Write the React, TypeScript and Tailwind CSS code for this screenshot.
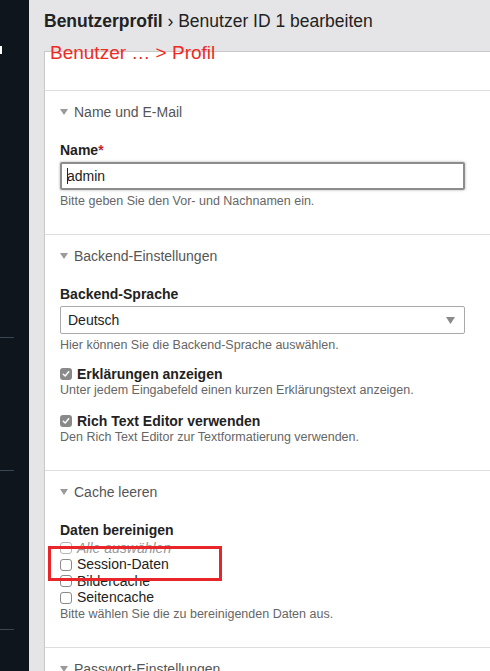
import React from "react";

function Tri() {
  return (
    <svg width="8" height="6" viewBox="0 0 8 6" className="mr-[6px] shrink-0">
      <path d="M0 0 H8 L4 6 Z" fill="#9a9a9a" />
    </svg>
  );
}

function Legend({ children }: { children: React.ReactNode }) {
  return (
    <div className="flex items-center h-[16px] text-[14px] leading-[16px] text-[#555]">
      <Tri />
      <span>{children}</span>
    </div>
  );
}

function CheckedBox() {
  return (
    <span className="w-[12px] h-[12px] rounded-[3px] bg-[#8a8a8a] flex items-center justify-center shrink-0 mr-[5px]">
      <svg width="8" height="8" viewBox="0 0 8 8">
        <path d="M1.3 4.2 L3.2 6 L6.7 1.8" stroke="#fff" strokeWidth="1.5" fill="none" strokeLinecap="round" strokeLinejoin="round" />
      </svg>
    </span>
  );
}

function EmptyBox({ faded }: { faded?: boolean }) {
  return (
    <span
      className={
        faded
          ? "w-[12px] h-[12px] rounded-[3px] border border-[#b5b5b5] bg-white shrink-0 mr-[5px]"
          : "w-[12px] h-[12px] rounded-[3px] border border-[#8a8a8a] bg-white shrink-0 mr-[5px]"
      }
    />
  );
}

function Help({ children, mt }: { children: React.ReactNode; mt: string }) {
  return <div className={`${mt} text-[12.5px] leading-[14px] text-[#666]`}>{children}</div>;
}

export default function App() {
  return (
    <div
      className="w-[490px] h-[671px] overflow-hidden flex bg-[#e5e5e7] relative"
      style={{ fontFamily: '"Liberation Sans", Arial, Helvetica, sans-serif' }}
    >
      {/* Sidebar */}
      <div className="w-[29px] shrink-0 bg-[#0e151d] relative">
        <div className="absolute left-0 top-[46px] w-[2px] h-[8px] bg-white" />
        <div className="absolute left-0 top-[337px] w-[14px] h-px bg-[#3c4650]" />
        <div className="absolute left-0 top-[470px] w-[14px] h-px bg-[#3c4650]" />
        <div className="absolute left-0 top-[629px] w-[14px] h-px bg-[#3c4650]" />
      </div>

      {/* Main */}
      <div className="flex-1 flex flex-col pl-[15px]">
        <div className="h-[51px] shrink-0 pt-[12px] text-[17.5px] leading-[18px] text-[#222]">
          <span className="font-bold">Benutzerprofil</span> › Benutzer ID 1 bearbeiten
        </div>

        <div className="flex-1 bg-white border-l border-t border-[#c8c8c8] relative">
          <div className="h-[39px] border-b border-[#dedede]" />

          {/* Section 1 */}
          <div className="pt-[13px] pb-[26px] pl-[15px] border-b border-[#dedede]">
            <Legend>Name und E-Mail</Legend>
            <div className="mt-[22px] text-[14px] leading-[16px] font-bold text-[#222]">
              Name<span className="text-[#c0262d]">*</span>
            </div>
            <div className="mt-[4px] w-[405px] h-[28px] border-2 border-[#8d8d8d] rounded-[2px] shadow-[0_0_2px_1px_rgba(0,0,0,0.15)] flex items-center pl-[5px] text-[14px] text-[#222]">
              <span className="w-px h-[16px] bg-[#222] -mr-px" />
              <span>admin</span>
            </div>
            <Help mt="mt-[4px]">Bitte geben Sie den Vor- und Nachnamen ein.</Help>
          </div>

          {/* Section 2 */}
          <div className="pt-[13px] pb-[26px] pl-[15px] border-b border-[#dedede]">
            <Legend>Backend-Einstellungen</Legend>
            <div className="mt-[22px] text-[14px] leading-[16px] font-bold text-[#222]">Backend-Sprache</div>
            <div className="mt-[4px] w-[405px] h-[28px] border border-[#a9a9a9] rounded-[2px] flex items-center justify-between pl-[7px] pr-[9px] text-[14px] text-[#222]">
              <span>Deutsch</span>
              <svg width="9" height="7" viewBox="0 0 9 7">
                <path d="M0 0 H9 L4.5 7 Z" fill="#8a8a8a" />
              </svg>
            </div>
            <Help mt="mt-[4px]">Hier können Sie die Backend-Sprache auswählen.</Help>
            <div className="mt-[14px] flex items-center h-[16px] text-[14px] leading-[16px] font-bold text-[#222]">
              <CheckedBox />
              <span>Erklärungen anzeigen</span>
            </div>
            <Help mt="mt-[1px]">Unter jedem Eingabefeld einen kurzen Erklärungstext anzeigen.</Help>
            <div className="mt-[16px] flex items-center h-[16px] text-[14px] leading-[16px] font-bold text-[#222]">
              <CheckedBox />
              <span>Rich Text Editor verwenden</span>
            </div>
            <Help mt="mt-[1px]">Den Rich Text Editor zur Textformatierung verwenden.</Help>
          </div>

          {/* Section 3 */}
          <div className="pt-[13px] pb-[26px] pl-[15px] border-b border-[#dedede]">
            <Legend>Cache leeren</Legend>
            <div className="mt-[22px] text-[14px] leading-[16px] font-bold text-[#222]">Daten bereinigen</div>
            <div className="mt-[2px] flex flex-col text-[14px] text-[#222]">
              <div className="flex items-center h-[16.5px] italic text-[#999]">
                <EmptyBox faded />
                <span>Alle auswählen</span>
              </div>
              <div className="flex items-center h-[16.5px]">
                <EmptyBox />
                <span>Session-Daten</span>
              </div>
              <div className="flex items-center h-[16.5px]">
                <EmptyBox />
                <span>Bildercache</span>
              </div>
              <div className="flex items-center h-[16.5px]">
                <EmptyBox />
                <span>Seitencache</span>
              </div>
            </div>
            <Help mt="mt-[1px]">Bitte wählen Sie die zu bereinigenden Daten aus.</Help>
          </div>

          {/* Section 4 */}
          <div className="pt-[13px] pl-[15px]">
            <Legend>Passwort-Einstellungen</Legend>
          </div>
        </div>
      </div>

      {/* Annotations */}
      <div className="absolute left-[50px] top-[42px] text-[19px] leading-[22px] text-[#ee2a24]">
        Benutzer … &gt; Profil
      </div>
      <div className="absolute left-[48px] top-[546px] w-[174px] h-[35px] border-[3px] border-[#e8262a]" />
    </div>
  );
}
